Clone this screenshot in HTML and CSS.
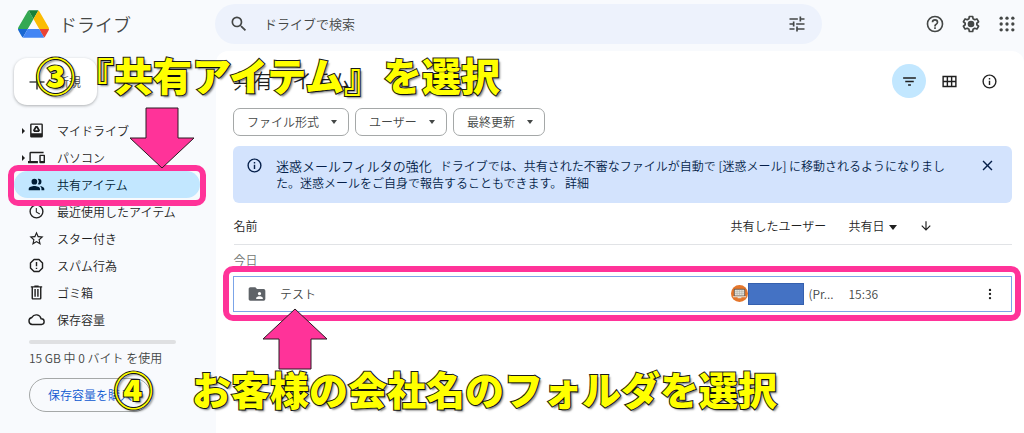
FILE: index.html
```html
<!DOCTYPE html>
<html lang="ja">
<head>
    <meta charset="UTF-8">
    <meta name="viewport" content="width=device-width, initial-scale=1.0">
    <title>共有アイテム - ドライブ</title>
    <link rel="stylesheet" href="styles.css">
</head>
<body>

    <header class="topbar">
        <a href="#" class="brand">
            <svg class="logo" viewBox="0 0 87.3 78" aria-hidden="true">
                <path fill="#1967d2" d="M6.6 66.85l3.85 6.65c.8 1.4 1.95 2.5 3.3 3.3L27.5 53H0c0 1.55.4 3.1 1.2 4.5z"/>
                <path fill="#34a853" d="M43.65 25L29.9 1.2c-1.35.8-2.5 1.9-3.3 3.3l-25.4 44A9.06 9.06 0 0 0 0 53h27.5z"/>
                <path fill="#ea4335" d="M73.55 76.8c1.35-.8 2.5-1.9 3.3-3.3l1.6-2.75 7.65-13.25c.8-1.4 1.2-2.95 1.2-4.5H59.8l5.85 11.5z"/>
                <path fill="#188038" d="M43.65 25L57.4 1.2C56.05.4 54.5 0 52.9 0H34.4c-1.6 0-3.15.45-4.5 1.2z"/>
                <path fill="#4285f4" d="M59.8 53H27.5L13.75 76.8c1.35.8 2.9 1.2 4.5 1.2h50.8c1.6 0 3.15-.45 4.5-1.2z"/>
                <path fill="#fbbc04" d="M73.4 26.5l-12.7-22c-.8-1.4-1.95-2.5-3.3-3.3L43.65 25 59.8 53h27.45c0-1.55-.4-3.1-1.2-4.5z"/>
            </svg>
            <span>ドライブ</span>
        </a>
        <form class="search">
            <svg class="icon icon-lg" viewBox="0 0 24 24" aria-hidden="true"><path d="M15.5 14h-.79l-.28-.27A6.47 6.47 0 0 0 16 9.5 6.5 6.5 0 1 0 9.5 16c1.61 0 3.09-.59 4.23-1.57l.27.28v.79l5 4.99L20.49 19zm-6 0C7.01 14 5 11.99 5 9.5S7.01 5 9.5 5 14 7.01 14 9.5 11.99 14 9.5 14z"/></svg>
            <input type="text" aria-label="ドライブで検索" placeholder="ドライブで検索">
            <button type="button" class="icon-btn" aria-label="検索オプション">
                <svg class="icon icon-lg" viewBox="0 0 24 24"><path d="M3 17v2h6v-2zM3 5v2h10V5zm10 16v-2h8v-2h-8v-2h-2v6zM7 9v2H3v2h4v2h2V9zm14 4v-2H11v2zm-6-4h2V7h4V5h-4V3h-2z"/></svg>
            </button>
        </form>
        <div class="top-actions">
            <button type="button" class="icon-btn" aria-label="サポート">
                <svg class="icon icon-lg" viewBox="0 0 24 24"><path d="M11 18h2v-2h-2zm1-16a10 10 0 1 0 0 20 10 10 0 0 0 0-20zm0 18c-4.41 0-8-3.59-8-8s3.59-8 8-8 8 3.59 8 8-3.59 8-8 8zm0-14a4 4 0 0 0-4 4h2c0-1.100.9-2 2-2s2 .9 2 2c0 2-3 1.750-3 5h2c0-2.250 3-2.500 3-5a4 4 0 0 0-4-4z"/></svg>
            </button>
            <button type="button" class="icon-btn" aria-label="設定">
                <svg class="icon icon-lg" viewBox="0 0 24 24"><path fill="none" stroke="#444746" stroke-width="2" stroke-linejoin="round" d="M10 3h4l.5 2.700 2 1.200 2.600-1 2 3.400-2.100 1.800v1.800l2.100 1.800-2 3.400-2.600-1-2 1.200L14 21h-4l-.5-2.700-2-1.200-2.600 1-2-3.400L5 12.900v-1.800L2.900 9.300l2-3.400 2.600 1 2-1.200z"/><circle cx="12" cy="12" r="4"/></svg>
            </button>
            <button type="button" class="icon-btn" aria-label="アプリ">
                <svg class="icon icon-lg" viewBox="0 0 24 24"><circle cx="5" cy="5" r="2"/><circle cx="12" cy="5" r="2"/><circle cx="19" cy="5" r="2"/><circle cx="5" cy="12" r="2"/><circle cx="12" cy="12" r="2"/><circle cx="19" cy="12" r="2"/><circle cx="5" cy="19" r="2"/><circle cx="12" cy="19" r="2"/><circle cx="19" cy="19" r="2"/></svg>
            </button>
        </div>
    </header>

    <div class="layout">
        <aside class="sidebar">
            <button type="button" class="new-btn">
                <svg class="icon icon-lg" viewBox="0 0 24 24" aria-hidden="true"><path d="M21 13h-8v8h-2v-8H3v-2h8V3h2v8h8z"/></svg>
                <span>新規</span>
            </button>

            <nav class="nav">
                <a href="#" class="nav-item has-children">
                    <svg class="icon" viewBox="0 0 24 24"><path fill-rule="evenodd" d="M19 2H5a2 2 0 0 0-2 2v16c0 1.100.9 2 2 2h14a2 2 0 0 0 2-2V4a2 2 0 0 0-2-2zm0 14H5V4h14z"/><path d="M10.500 5.500h3l3.500 6-1.500 2.500h-7L7 11.500zM12 8l-2 3.500h4z" fill-rule="evenodd"/></svg>
                    <span>マイドライブ</span>
                </a>
                <a href="#" class="nav-item has-children">
                    <svg class="icon" viewBox="0 0 24 24"><path d="M4 6h18V4H4a2 2 0 0 0-2 2v11H0v3h14v-3H4zm19 2h-6c-.55 0-1 .45-1 1v10c0 .55.45 1 1 1h6c.55 0 1-.45 1-1V9c0-.55-.45-1-1-1zm-1 9h-4v-7h4z"/></svg>
                    <span>パソコン</span>
                </a>
                <a href="#" class="nav-item active">
                    <svg class="icon" viewBox="0 0 24 24"><circle cx="9" cy="8" r="4"/><path d="M9 14c-3 0-8 1.300-8 4v2h16v-2c0-2.700-5-4-8-4zM15 12a4 4 0 0 0 0-8c-.5 0-.9.1-1.300.2a6 6 0 0 1 0 7.600c.4.1.8.2 1.300.2zM16.700 14.100c1.400.9 2.300 2.200 2.300 3.900v2h4v-2c0-2.200-3.400-3.500-6.300-3.900z"/></svg>
                    <span>共有アイテム</span>
                </a>
                <a href="#" class="nav-item">
                    <svg class="icon" viewBox="0 0 24 24"><path d="M12 2a10 10 0 1 0 0 20 10 10 0 0 0 0-20zm0 18c-4.420 0-8-3.580-8-8s3.580-8 8-8 8 3.580 8 8-3.580 8-8 8zm.5-13H11v6l5.250 3.150.75-1.230-4.500-2.670z"/></svg>
                    <span>最近使用したアイテム</span>
                </a>
                <a href="#" class="nav-item">
                    <svg class="icon" viewBox="0 0 24 24"><path d="M22 9.240l-7.190-.62L12 2 9.190 8.630 2 9.240l5.460 4.730L5.820 21 12 17.270 18.180 21l-1.630-7.030zM12 15.400l-3.760 2.270 1-4.280-3.320-2.880 4.380-.38L12 6.100l1.710 4.040 4.380.38-3.320 2.880 1 4.280z"/></svg>
                    <span>スター付き</span>
                </a>
                <a href="#" class="nav-item">
                    <svg class="icon" viewBox="0 0 24 24"><path fill="none" stroke="#1f1f1f" stroke-width="2" stroke-linejoin="round" d="M8.500 3.500h7l5 5v7l-5 5h-7l-5-5v-7z"/><path d="M11 7h2v6h-2zm0 8h2v2h-2z"/></svg>
                    <span>スパム行為</span>
                </a>
                <a href="#" class="nav-item">
                    <svg class="icon" viewBox="0 0 24 24"><path fill-rule="evenodd" d="M15 3V2H9v1H4v2h1v15c0 1.100.9 2 2 2h10a2 2 0 0 0 2-2V5h1V3zm2 17H7V5h10zM9 7h2v11H9zm4 0h2v11h-2z"/></svg>
                    <span>ゴミ箱</span>
                </a>
                <a href="#" class="nav-item">
                    <svg class="icon" viewBox="0 0 24 24"><path fill="none" stroke="#1f1f1f" stroke-width="2" d="M6 19a5 5 0 0 1-.5-9.900 7 7 0 0 1 13 1.900A4 4 0 0 1 19 19z"/></svg>
                    <span>保存容量</span>
                </a>
            </nav>

            <div class="storage">
                <div class="storage-bar"></div>
                <p>15 GB 中 0 バイト を使用</p>
                <button type="button" class="storage-btn">保存容量を購入</button>
            </div>
        </aside>

        <main class="panel">
            <div class="title-row">
                <h1>共有アイテム</h1>
                <div class="view-actions">
                    <button type="button" class="view-btn selected" aria-label="フィルタ">
                        <svg class="icon" viewBox="0 0 24 24"><path d="M10 18h4v-2h-4zM3 6v2h18V6zm3 7h12v-2H6z"/></svg>
                    </button>
                    <button type="button" class="view-btn" aria-label="グリッド表示">
                        <svg class="icon" viewBox="0 0 24 24"><path fill="none" stroke="#1f1f1f" stroke-width="2" d="M3 5h18v14H3zM3 12h18M9 5v14M15 5v14"/></svg>
                    </button>
                    <button type="button" class="view-btn" aria-label="詳細を表示">
                        <svg class="icon" viewBox="0 0 24 24"><path d="M11 7h2v2h-2zm0 4h2v6h-2zm1-9a10 10 0 1 0 0 20 10 10 0 0 0 0-20zm0 18c-4.410 0-8-3.590-8-8s3.590-8 8-8 8 3.590 8 8-3.590 8-8 8z"/></svg>
                    </button>
                </div>
            </div>

            <div class="chips">
                <div class="chip">
                    <select aria-label="ファイル形式"><option>ファイル形式</option></select>
                    <svg class="caret" viewBox="0 0 6 4"><path d="M0 0h6L3 4z"/></svg>
                </div>
                <div class="chip">
                    <select aria-label="ユーザー"><option>ユーザー</option></select>
                    <svg class="caret" viewBox="0 0 6 4"><path d="M0 0h6L3 4z"/></svg>
                </div>
                <div class="chip">
                    <select aria-label="最終更新"><option>最終更新</option></select>
                    <svg class="caret" viewBox="0 0 6 4"><path d="M0 0h6L3 4z"/></svg>
                </div>
            </div>

            <div class="banner">
                <svg class="icon" viewBox="0 0 24 24"><path d="M11 7h2v2h-2zm0 4h2v6h-2zm1-9a10 10 0 1 0 0 20 10 10 0 0 0 0-20zm0 18c-4.410 0-8-3.590-8-8s3.590-8 8-8 8 3.590 8 8-3.590 8-8 8z"/></svg>
                <p><strong>迷惑メールフィルタの強化</strong>ドライブでは、共有された不審なファイルが自動で [迷惑メール] に移動されるようになりました。迷惑メールをご自身で報告することもできます。 <a href="#">詳細</a></p>
                <button type="button" class="icon-btn" aria-label="閉じる">
                    <svg class="icon" viewBox="0 0 24 24"><path d="M19 6.410L17.590 5 12 10.590 6.410 5 5 6.410 10.590 12 5 17.590 6.410 19 12 13.410 17.590 19 19 17.590 13.410 12z"/></svg>
                </button>
            </div>

            <div class="files-wrap">
                <table class="files">
                    <colgroup>
                        <col>
                        <col class="col-user">
                        <col class="col-date">
                        <col class="col-menu">
                    </colgroup>
                    <thead>
                        <tr>
                            <th>名前</th>
                            <th>共有したユーザー</th>
                            <th>共有日<svg class="sort-caret" viewBox="0 0 8 5"><path d="M0 0h8L4 5z"/></svg></th>
                            <th>
                                <button type="button" class="icon-btn sort-btn" aria-label="並べ替え">
                                    <svg class="icon icon-sm" viewBox="0 0 24 24"><path d="M20 12l-1.410-1.410L13 16.170V4h-2v12.170l-5.580-5.590L4 12l8 8z"/></svg>
                                </button>
                            </th>
                        </tr>
                    </thead>
                    <tbody>
                        <tr class="group">
                            <td colspan="4">今日</td>
                        </tr>
                        <tr class="file">
                            <td>
                                <div class="file-name">
                                    <svg class="folder" viewBox="0 0 24 24"><path fill-rule="evenodd" d="M20 6h-8l-2-2H4c-1.100 0-2 .9-2 2v12c0 1.100.9 2 2 2h16a2 2 0 0 0 2-2V8a2 2 0 0 0-2-2zm-5 3.500a2 2 0 1 1 0 4 2 2 0 0 1 0-4zM11 18v-1c0-1.500 2.700-2.300 4-2.300s4 .8 4 2.300v1z"/></svg>
                                    <span>テスト</span>
                                </div>
                            </td>
                            <td>
                                <div class="owner">
                                    <svg class="avatar" viewBox="0 0 18 18"><circle cx="9" cy="9" r="9" fill="#e5762b"/><path fill="#6b5a50" d="M3 4h12v8H3z"/><path fill="#e4e2da" d="M4 5h10v6H4zM2 12h14v1H2zM7 13h4v1H7z"/><path stroke="#aaa89f" stroke-width=".5" d="M4 7h10M4 9h10M6.500 5v6M9 5v6M11.500 5v6"/></svg>
                                    <span class="redacted"></span>
                                    <span class="owner-name">(Pr...</span>
                                </div>
                            </td>
                            <td>15:36</td>
                            <td class="menu-cell">
                                <button type="button" class="icon-btn" aria-label="その他の操作">
                                    <svg class="icon icon-sm" viewBox="0 0 24 24"><circle cx="12" cy="5" r="2"/><circle cx="12" cy="12" r="2"/><circle cx="12" cy="19" r="2"/></svg>
                                </button>
                            </td>
                        </tr>
                    </tbody>
                </table>
                <div class="frame frame-row"></div>
            </div>
        </main>
    </div>

    <!-- tutorial notes on top of the screen -->
    <div class="frame frame-nav"></div>
    <svg class="arrow arrow-down" viewBox="0 0 66 62"><path d="M17 1h32v30h16L33 61 1 31h16z"/></svg>
    <svg class="arrow arrow-up" viewBox="0 0 66 62"><path d="M17 61h32V31h16L33 1 1 31h16z"/></svg>
    <p class="note note-3">③『共有アイテム』を選択</p>
    <p class="note note-4">④　お客様の会社名のフォルダを選択</p>

</body>
</html>
```
FILE: styles.css
```css
* {
    box-sizing: border-box;
}

body {
    margin: 0;
    position: relative;
    min-height: 100vh;
    display: flex;
    flex-direction: column;
    overflow-x: hidden;
    background-color: #f8fafd;
    color: #444746;
    font-family: "Noto Sans CJK JP", sans-serif;
    font-size: 12px;
    font-weight: 350;
    line-height: 18px;
}

a {
    color: inherit;
    text-decoration: none;
}

p, h1 {
    margin: 0;
}

button, input, select {
    font: inherit;
    color: inherit;
}

svg {
    display: block;
    flex-shrink: 0;
}

.icon {
    width: 17px;
    height: 17px;
    fill: #1f1f1f;
}

.icon-lg {
    width: 20px;
    height: 20px;
    fill: #444746;
}

.icon-sm {
    width: 14px;
    height: 14px;
}

.icon-btn {
    padding: 0;
    border: none;
    background: none;
    cursor: pointer;
}

/* Top bar */
.topbar {
    display: flex;
    align-items: center;
    height: 51px;
    padding: 0 7px 3px 18px;
}

.brand {
    display: flex;
    align-items: center;
    gap: 10px;
    width: 197px;
    font-size: 18px;
    line-height: 24px;
}

.logo {
    width: 31px;
    height: 28px;
}

.search {
    flex: 1;
    display: flex;
    align-items: center;
    gap: 15px;
    height: 40px;
    padding: 0 15px 0 14px;
    border-radius: 20px;
    background-color: #edf2fc;
}

.search input {
    flex: 1;
    min-width: 0;
    padding: 0;
    border: none;
    outline: none;
    background: none;
    font-size: 13px;
}

.search input::placeholder {
    color: #444746;
}

.top-actions {
    display: flex;
    justify-content: flex-end;
    gap: 16px;
    width: 195px;
}

/* Layout */
.layout {
    flex: 1;
    display: flex;
}

.sidebar {
    width: 216px;
    padding: 7px 16px 16px 14px;
}

.new-btn {
    display: flex;
    align-items: center;
    gap: 10px;
    height: 47px;
    padding: 0 16px 0 13px;
    border: none;
    border-radius: 13px;
    background-color: #fff;
    box-shadow: 0 1px 3px rgba(60, 64, 67, 0.4);
}

.nav {
    margin-top: 12px;
}

.nav-item {
    position: relative;
    display: flex;
    align-items: center;
    gap: 12px;
    height: 27px;
    padding-left: 14px;
    border-radius: 14px;
    color: #1f1f1f;
}

.nav-item.active {
    background-color: #c2e7ff;
    color: #001d35;
}

.active .icon {
    fill: #001d35;
}

.has-children::before {
    content: "";
    position: absolute;
    left: 8px;
    border: 3px solid transparent;
    border-left-color: #1f1f1f;
    border-right: none;
}

.storage {
    padding: 7px 24px 0 15px;
}

.storage-bar {
    height: 4px;
    border-radius: 2px;
    background-color: #dfe0e2;
}

.storage p {
    margin-top: 5px;
    white-space: nowrap;
}

.storage-btn {
    height: 34px;
    margin-top: 11px;
    padding: 0 18px;
    border: 1px solid #a5a8a8;
    border-radius: 17px;
    background: none;
    color: #0b57d0;
}

/* Main panel */
.panel {
    flex: 1;
    min-width: 0;
    padding: 13px 12px 16px 17px;
    border-radius: 12px 12px 0 0;
    background-color: #fff;
}

.title-row {
    display: flex;
    align-items: center;
    justify-content: space-between;
    padding-right: 6px;
}

h1 {
    color: #1f1f1f;
    font-size: 20px;
    font-weight: 350;
    line-height: 28px;
}

.view-actions {
    display: flex;
    gap: 6px;
}

.view-btn {
    display: flex;
    align-items: center;
    justify-content: center;
    width: 34px;
    height: 34px;
    padding: 0;
    border: none;
    border-radius: 50%;
    background: none;
}

.view-btn.selected {
    background-color: #c2e7ff;
}

.chips {
    display: flex;
    gap: 6px;
    margin-top: 10px;
}

.chip {
    position: relative;
}

.chip select {
    display: block;
    height: 28px;
    padding: 0 28px 0 13px;
    border: 1px solid #a5a8a8;
    border-radius: 7px;
    background: none;
    appearance: none;
}

.caret {
    position: absolute;
    top: 12px;
    right: 12px;
    width: 6px;
    height: 4px;
    fill: #444746;
}

.banner {
    display: flex;
    align-items: flex-start;
    gap: 13px;
    min-height: 57px;
    margin-top: 10px;
    padding: 11px 16px 10px 13px;
    border-radius: 6px;
    background-color: #d3e3fd;
    color: #041e49;
}

.banner p {
    flex: 1;
    padding-right: 14px;
    line-height: 17px;
}

.banner strong {
    margin-right: 8px;
    font-size: 13px;
    font-weight: 350;
}

.banner .icon {
    fill: #041e49;
}

/* File list */
.files-wrap {
    position: relative;
    margin-top: 6px;
}

.files {
    width: 100%;
    table-layout: fixed;
    border-collapse: collapse;
}

.col-user {
    width: 118px;
}

.col-date {
    width: 70px;
}

.col-menu {
    width: 93px;
}

.files th, .files td {
    padding: 0;
    text-align: left;
}

.files th {
    height: 35px;
    border-bottom: 1px solid #e1e3e6;
    color: #1f1f1f;
    font-weight: 350;
}

.sort-caret {
    display: inline-block;
    width: 8px;
    height: 5px;
    margin-left: 4px;
    vertical-align: middle;
    fill: #1f1f1f;
}

.sort-btn {
    display: block;
}

.files .group td {
    height: 32px;
    color: #747775;
}

.files .file td {
    height: 35px;
    border-top: 1px solid #7ba4e8;
    border-bottom: 1px solid #7ba4e8;
}

.files .file td:first-child {
    border-left: 1px solid #7ba4e8;
}

.files .file td:last-child {
    border-right: 1px solid #7ba4e8;
}

.file-name {
    display: flex;
    align-items: center;
    gap: 13px;
    padding-left: 13px;
}

.folder {
    width: 20px;
    height: 20px;
    fill: #5f6368;
}

.owner {
    display: flex;
    align-items: center;
}

.avatar {
    width: 17px;
    height: 17px;
}

.redacted {
    width: 56px;
    height: 22px;
    border: 1px solid #3560ae;
    background-color: #4472c4;
}

.owner-name {
    margin-left: 5px;
}

.files .menu-cell {
    padding-right: 14px;
}

.menu-cell .icon-btn {
    display: block;
    margin-left: auto;
}

/* Tutorial notes */
.frame {
    position: absolute;
    border: 6px solid #ff3399;
    border-radius: 10px;
    pointer-events: none;
}

.frame-nav {
    top: 165px;
    left: 8px;
    width: 198px;
    height: 41px;
}

.frame-row {
    bottom: -9px;
    left: -10px;
    right: -9px;
    height: 55px;
}

.arrow {
    position: absolute;
    width: 66px;
    height: 62px;
    fill: #ff3399;
    stroke: #2b1a22;
    stroke-width: 1;
}

.arrow-down {
    top: 107px;
    left: 129px;
}

.arrow-up {
    top: 308px;
    left: 262px;
}

.note {
    position: absolute;
    color: #ffff00;
    font-size: 39px;
    font-weight: 900;
    line-height: 48px;
    white-space: nowrap;
    -webkit-text-stroke: 2px #1a1a1a;
    paint-order: stroke fill;
    text-shadow: 2px 2px 2px rgba(0, 0, 0, 0.5);
}

.note-3 {
    top: 50px;
    left: 36px;
}

.note-4 {
    top: 364px;
    left: 114px;
}
```
